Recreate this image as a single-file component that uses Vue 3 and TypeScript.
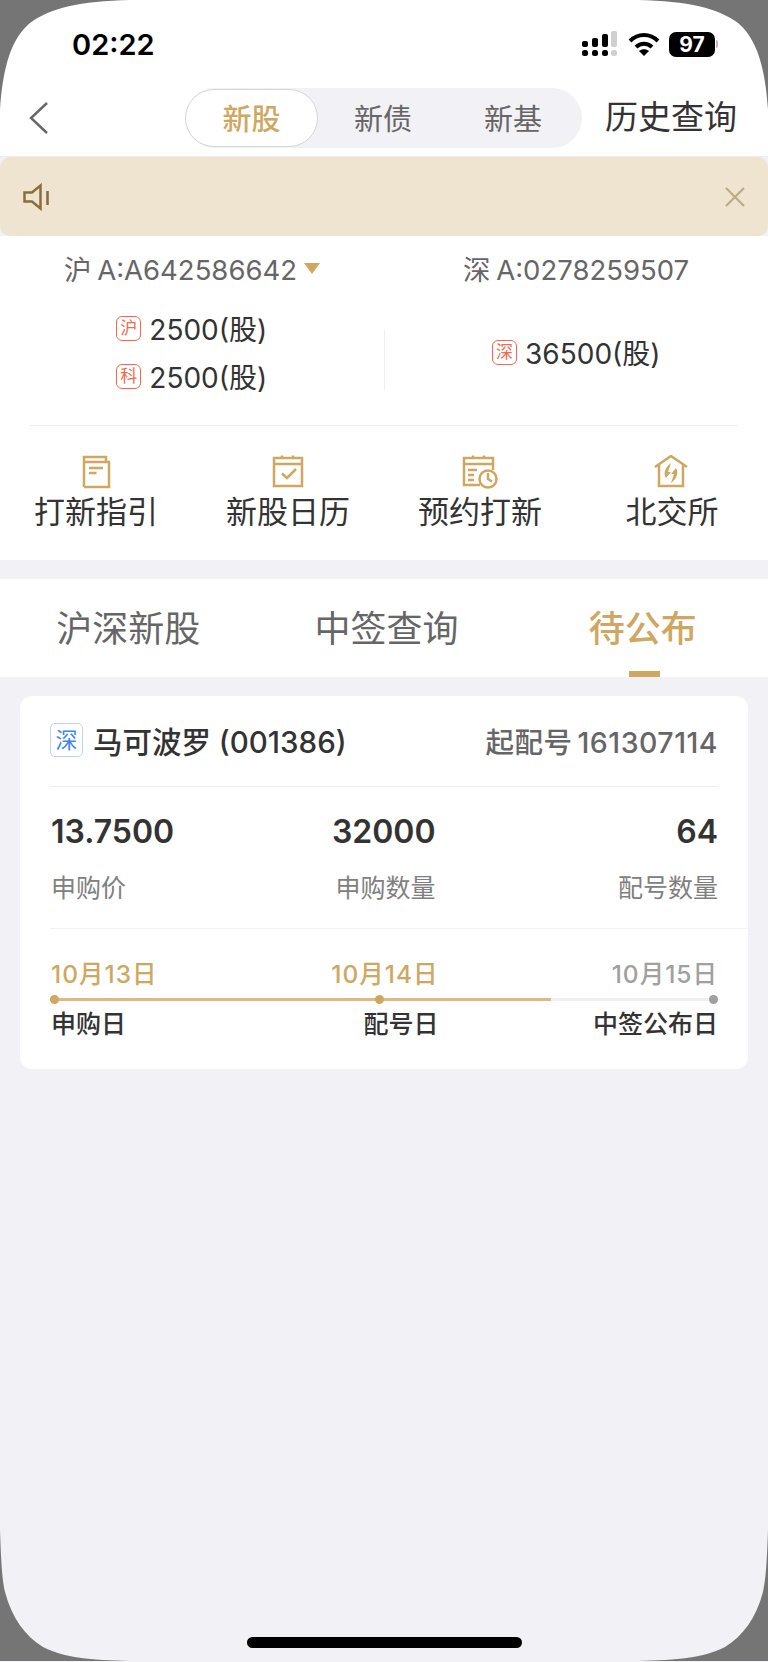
<script setup lang="ts">
interface Entry {
  label: string
  icon: string
}

interface Stat {
  value: string
  label: string
}

interface Step {
  date: string
  label: string
  done: boolean
}

const entries: Entry[] = [
  { label: '打新指引', icon: 'guide' },
  { label: '新股日历', icon: 'calendar' },
  { label: '预约打新', icon: 'reserve' },
  { label: '北交所', icon: 'house' },
]

const stats: Stat[] = [
  { value: '13.7500', label: '申购价' },
  { value: '32000', label: '申购数量' },
  { value: '64', label: '配号数量' },
]

const steps: Step[] = [
  { date: '10月13日', label: '申购日', done: true },
  { date: '10月14日', label: '配号日', done: true },
  { date: '10月15日', label: '中签公布日', done: false },
]
</script>

<template>
  <div class="screen">
    <div class="status">
      <span class="time">02:22</span>
      <div class="status-icons">
        <svg width="36" height="26" viewBox="0 0 36 26">
          <g fill="#000">
            <rect x="0" y="10" width="6" height="6" rx="2" />
            <rect x="10" y="7" width="6" height="9" rx="2" />
            <rect x="20" y="3" width="6" height="13" rx="2" />
            <rect x="0" y="19" width="6" height="6" rx="2.5" />
            <rect x="10" y="19" width="6" height="6" rx="2.5" />
            <rect x="20" y="19" width="6" height="6" rx="2.5" />
          </g>
          <rect x="29" y="0" width="6" height="16" rx="2" fill="#cfcfcf" />
          <rect x="29" y="19" width="6" height="6" rx="2.5" fill="#cfcfcf" />
        </svg>
        <svg class="wifi" width="32" height="24" viewBox="0 0 32 24">
          <path d="M2 9C10 1 22 1 30 9" fill="none" stroke="#000" stroke-width="4" />
          <path d="M8 15C12.500 10.500 19.500 10.500 24 15" fill="none" stroke="#000" stroke-width="4" />
          <path d="M16 24L11 19C14 16.500 18 16.500 21 19Z" fill="#000" />
        </svg>
        <div class="battery">97</div>
        <span class="battery-cap"></span>
      </div>
    </div>

    <div class="nav">
      <svg class="back" width="20" height="32" viewBox="0 0 20 32">
        <path d="M18 1L2 16L18 31" fill="none" stroke="#666" stroke-width="2.400" />
      </svg>
      <div class="seg">
        <span class="seg-item active">新股</span>
        <span class="seg-item">新债</span>
        <span class="seg-item">新基</span>
      </div>
      <span class="history">历史查询</span>
    </div>

    <div class="notice">
      <svg width="28" height="28" viewBox="0 0 28 28">
        <path d="M2.500 9.500H10L18.500 2.500V25.500L10 18.500H2.500Z" fill="none" stroke="#8a6d3b" stroke-width="2.500" />
        <path d="M25.500 8V22" fill="none" stroke="#8a6d3b" stroke-width="2.600" />
      </svg>
      <svg width="22" height="22" viewBox="0 0 22 22">
        <path d="M2 2L20 20M20 2L2 20" fill="none" stroke="#bcab86" stroke-width="2.200" />
      </svg>
    </div>

    <section class="panel">
      <div class="accounts">
        <div class="account">沪 A:A642586642<span class="caret"></span></div>
        <div class="account">深 A:0278259507</div>
      </div>
      <div class="quota">
        <div class="quota-col">
          <div class="quota-row"><span class="stamp">沪</span>2500(股)</div>
          <div class="quota-row"><span class="stamp">科</span>2500(股)</div>
        </div>
        <div class="quota-divider"></div>
        <div class="quota-col">
          <div class="quota-row"><span class="stamp">深</span>36500(股)</div>
        </div>
      </div>
      <div class="panel-line"></div>
      <div class="entries">
        <div v-for="item in entries" :key="item.label" class="entry">
          <svg width="36" height="34" viewBox="0 0 36 34" fill="none" stroke="#cfa760" stroke-width="2.500">
            <template v-if="item.icon === 'guide'">
              <path d="M6 32V2H28V7M6 7H31V32H6" />
              <path d="M11 13H25M11 18H18.500" />
            </template>
            <template v-else-if="item.icon === 'calendar'">
              <rect x="4" y="3" width="28" height="28" />
              <path d="M4 9H32M12 0.500V3M23 0.500V3M12 18.500L17 23L26 14" />
            </template>
            <template v-else-if="item.icon === 'reserve'">
              <path d="M18 30H2V3H31V15M2 9H31M11 0.500V3M22 0.500V3M6 15H15M6 20H12M6 25H12" />
              <circle cx="26" cy="24" r="8.500" />
              <path d="M26 18V24L30 26.500" />
            </template>
            <template v-else>
              <path d="M1 12L17 1L33 12M5 10V31H29V10" />
              <path d="M17 8C11 12 9 19 12 23L17 17H14Z" fill="#cfa760" stroke="none" />
              <path d="M17 28C23 24 25 17 22 13L17 19H20Z" fill="#cfa760" stroke="none" />
            </template>
          </svg>
          <span>{{ item.label }}</span>
        </div>
      </div>
    </section>

    <div class="tabs">
      <span class="tab">沪深新股</span>
      <span class="tab">中签查询</span>
      <span class="tab current">待公布</span>
    </div>

    <article class="card">
      <header class="card-head">
        <div class="name">
          <span class="market">深</span>
          <span>马可波罗 (001386)</span>
        </div>
        <span class="start-no">起配号 161307114</span>
      </header>
      <div class="stats">
        <div v-for="s in stats" :key="s.label" class="stat">
          <strong>{{ s.value }}</strong>
          <span>{{ s.label }}</span>
        </div>
      </div>
      <div class="timeline">
        <div class="steps dates">
          <span v-for="s in steps" :key="s.date" :class="{ pending: !s.done }">{{ s.date }}</span>
        </div>
        <div class="track">
          <div class="progress"></div>
          <span class="dot dot-a"></span>
          <span class="dot dot-b"></span>
          <span class="dot dot-c"></span>
        </div>
        <div class="steps names">
          <span v-for="s in steps" :key="s.label">{{ s.label }}</span>
        </div>
      </div>
    </article>

    <div class="home-bar"></div>

    <svg class="corners" width="768" height="1662" viewBox="0 0 768 1662">
      <g fill="#757575">
        <path d="M0 0H130C80 1 50 8 30 23C12 38 3 65 0 110Z" />
        <path d="M768 0H638C688 1 718 8 738 23C756 38 765 65 768 110Z" />
        <path d="M0 1661H130C90 1660 65 1658 43 1647C25 1636 12 1618 5 1592C2 1578 1 1560 0 1530Z" />
        <path d="M768 1661H638C678 1660 703 1658 725 1647C743 1636 756 1618 763 1592C766 1578 767 1560 768 1530Z" />
      </g>
    </svg>
  </div>
</template>

<style>
body {
  background: #f1f1f6;
}
</style>

<style scoped>
.screen {
  position: relative;
  width: 768px;
  height: 1662px;
  overflow: hidden;
  background: #f1f1f6;
  font-family: Inter, "Noto Sans CJK SC", sans-serif;
  color: #333;
}

.status {
  display: flex;
  align-items: center;
  justify-content: space-between;
  height: 88px;
  padding: 0 50px 0 72px;
  background: #fff;
  box-sizing: border-box;
}

.time {
  font-size: 29px;
  font-weight: 600;
  color: #000;
}

.status-icons {
  display: flex;
  align-items: center;
}

.wifi {
  margin-left: 10px;
}

.battery {
  margin-left: 9px;
  width: 46px;
  height: 25px;
  border-radius: 7px;
  background: #000;
  color: #fff;
  font-size: 21px;
  font-weight: 700;
  line-height: 25px;
  text-align: center;
}

.battery-cap {
  width: 2px;
  height: 8px;
  margin-left: 1px;
  border-radius: 0 2px 2px 0;
  background: #bbb;
}

.nav {
  display: flex;
  align-items: center;
  height: 69px;
  padding: 0 0 8px 29px;
  background: #fff;
  border-bottom: 1px solid #eee;
  box-sizing: border-box;
}

.back {
  flex: none;
}

.seg {
  display: flex;
  align-items: center;
  width: 397px;
  height: 60px;
  margin-left: 136px;
  border-radius: 30px;
  background: #f1f1f6;
}

.seg-item {
  flex: 0 0 130px;
  height: 58px;
  padding-top: 3px;
  font-size: 29px;
  line-height: 56px;
  text-align: center;
  color: #666;
  box-sizing: border-box;
}

.seg-item.active {
  flex: 0 0 133px;
  border: 1px solid #d6d6d6;
  border-radius: 30px;
  background: #fff;
  color: #cfa760;
  font-weight: 500;
  padding-top: 2px;
}

.history {
  margin-left: 23px;
  font-size: 33px;
  line-height: 40px;
  margin-top: -3px;
  white-space: nowrap;
  color: #333;
}

.notice {
  display: flex;
  align-items: center;
  justify-content: space-between;
  height: 79px;
  padding: 0 22px 0 22px;
  border-radius: 10px;
  background: #efe4d0;
}

.panel {
  height: 324px;
  background: #fff;
  box-sizing: border-box;
}

.accounts {
  display: flex;
  height: 66px;
  padding-bottom: 2px;
  box-sizing: border-box;
}

.account {
  flex: 1;
  display: flex;
  align-items: center;
  justify-content: center;
  font-size: 27.5px;
  word-spacing: -2px;
  color: #666;
}

.caret {
  width: 0;
  height: 0;
  margin-left: 7px;
  border-left: 8px solid transparent;
  border-right: 8px solid transparent;
  border-top: 11px solid #cfa760;
}

.quota {
  display: flex;
  height: 123px;
  padding-bottom: 23px;
  box-sizing: border-box;
}

.quota-col {
  flex: 1;
  display: flex;
  flex-direction: column;
  align-items: center;
  justify-content: center;
  gap: 14px;
}

.quota-divider {
  width: 1px;
  height: 60px;
  margin-top: 28px;
  background: #eee;
}

.quota-row {
  display: flex;
  align-items: center;
  height: 34px;
  font-size: 28px;
  color: #333;
}

.stamp {
  width: 25px;
  height: 25px;
  margin-right: 8px;
  border: 1.500px solid #f2694d;
  border-radius: 6px;
  color: #f2694d;
  font-size: 17px;
  line-height: 22px;
  text-align: center;
  box-sizing: border-box;
}

.panel-line {
  height: 1px;
  margin: 0 30px;
  background: #eee;
}

.entries {
  display: flex;
  justify-content: space-between;
  margin-top: 29px;
}

.entry {
  flex: 1;
  display: flex;
  flex-direction: column;
  align-items: center;
  gap: 1px;
  font-size: 31px;
  line-height: 44px;
  color: #333;
}

.tabs {
  display: flex;
  align-items: center;
  height: 98px;
  margin-top: 19px;
  padding-top: 2px;
  background: #fff;
  box-sizing: border-box;
}

.tab {
  flex: 1;
  position: relative;
  padding-left: 3px;
  font-size: 36px;
  line-height: 50px;
  text-align: center;
  color: #666;
  box-sizing: border-box;
}

.tab:nth-child(2) {
  padding-left: 8px;
}

.tab.current {
  padding-left: 6px;
  color: #cfa760;
  font-weight: 500;
}

.tab.current::after {
  content: "";
  position: absolute;
  left: 50%;
  bottom: -23px;
  width: 31px;
  height: 6px;
  margin-left: -11px;
  background: #cfa760;
}

.card {
  margin: 19px 20px 0;
  height: 373px;
  padding: 0 0 0 30px;
  border-radius: 12px;
  background: #fff;
  box-sizing: border-box;
}

.card-head {
  display: flex;
  align-items: center;
  justify-content: space-between;
  height: 91px;
  margin-right: 30px;
  padding-bottom: 2px;
  border-bottom: 1px solid #eee;
  box-sizing: border-box;
}

.name {
  display: flex;
  align-items: center;
  gap: 10px;
  font-size: 29.5px;
  font-weight: 500;
  color: #333;
}

.market {
  width: 33px;
  height: 34px;
  border: 1px solid #bcd6fb;
  border-radius: 5px;
  color: #3d85ef;
  font-size: 22px;
  font-weight: 400;
  line-height: 32px;
  text-align: center;
  box-sizing: border-box;
}

.start-no {
  font-size: 28.5px;
  font-weight: 500;
  letter-spacing: 0.5px;
  word-spacing: -3px;
  color: #666;
}

.stats {
  display: grid;
  grid-template-columns: 1fr 102px 1fr;
  height: 141px;
  margin-right: 30px;
  padding: 24px 0 0 1px;
  box-sizing: border-box;
}

.stat {
  display: flex;
  flex-direction: column;
  gap: 19px;
}

.stat:nth-child(2),
.stat:last-child {
  align-items: flex-end;
}

.stat strong {
  font-size: 32px;
  font-weight: 600;
  line-height: 42px;
  color: #333;
}

.stat span {
  font-size: 25px;
  line-height: 32px;
  white-space: nowrap;
  color: #808080;
}

.timeline {
  padding: 28px 30px 0 0;
  border-top: 1px solid #f2f2f2;
}

.steps {
  display: grid;
  grid-template-columns: 1fr 108px 1fr;
  padding-left: 1px;
  font-size: 25px;
  line-height: 34px;
  white-space: nowrap;
}

.steps span:nth-child(2),
.steps span:last-child {
  text-align: right;
}

.dates {
  color: #cfa760;
  font-size: 24.5px;
  font-weight: 500;
  letter-spacing: 1px;
}

.dates .pending {
  color: #a0a0a0;
}

.names {
  color: #333;
  font-weight: 500;
}

.track {
  position: relative;
  height: 3px;
  margin: 7px 0 6px;
  background: #f0f0f0;
}

.progress {
  width: 501px;
  height: 100%;
  background: #dcb985;
}

.dot {
  position: absolute;
  top: -3px;
  width: 9px;
  height: 9px;
  border-radius: 50%;
  background: #cfa760;
}

.dot-a {
  left: 0;
}

.dot-b {
  left: 325px;
}

.dot-c {
  right: 0;
  background: #a0a0a0;
}

.home-bar {
  position: absolute;
  left: 247px;
  top: 1637px;
  width: 275px;
  height: 11px;
  border-radius: 6px;
  background: #000;
}

.corners {
  position: absolute;
  left: 0;
  top: 0;
  pointer-events: none;
}
</style>
